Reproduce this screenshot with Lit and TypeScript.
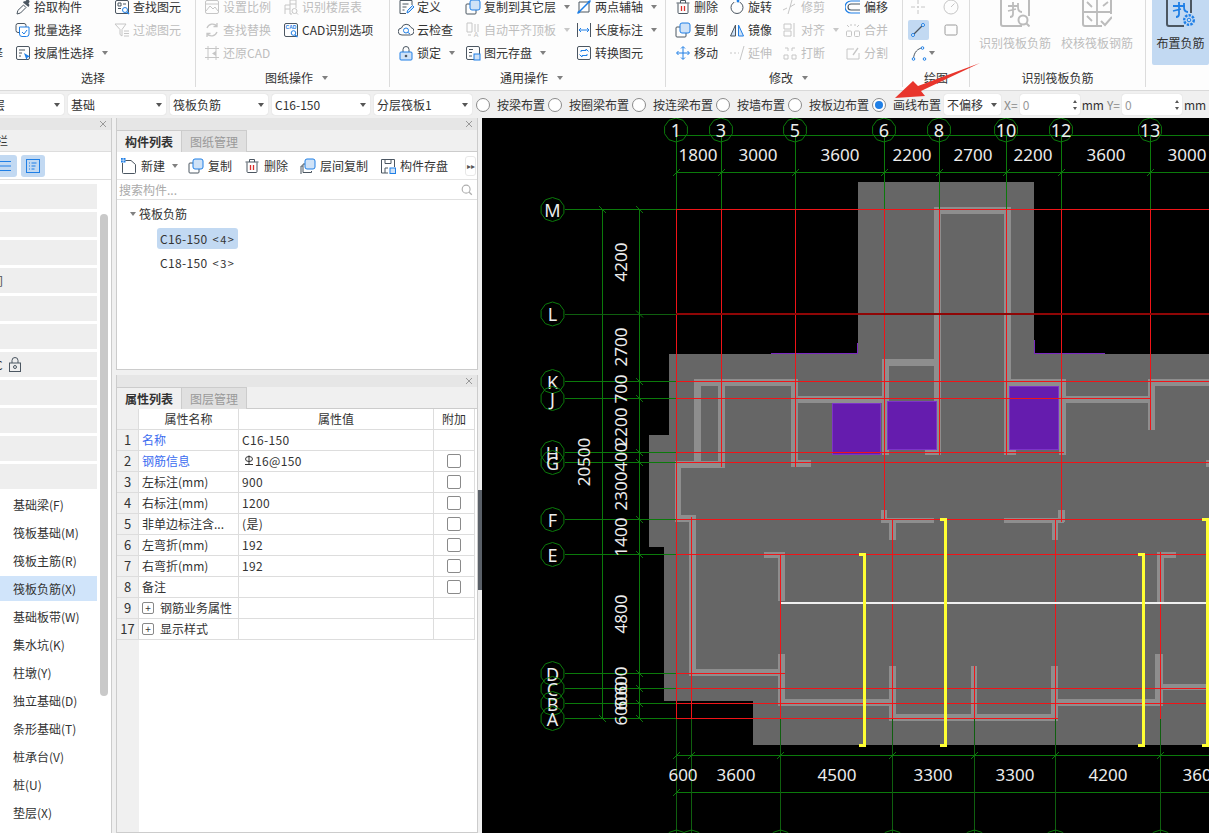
import {LitElement, html, css, svg} from 'lit';
import {customElement} from 'lit/decorators.js';

const D = '#4b5661';
const B = '#1f7fe6';
const L = '#cfe2f7';
const G = '#c6c6c6';

const box = (c: string) => svg`<rect x="1.5" y="1.5" width="13" height="13" rx="1.5" fill="none" stroke=${c}/>`;

const ICONS: Record<string, unknown> = {
  pick: svg`<path d="M2 15l.8-3.5L8.5 6l2.5 2.5L5.5 14z" fill="none" stroke=${D}/><path d="M8 3.5L13.5 8l1-2-1-1.5 1-1.5c.5-1.500-1.500-3-3-2L10 2.500 9 2z" fill=${D}/>`,
  batch: svg`<rect x="1" y="1.500" width="10" height="9" rx="2" fill="none" stroke=${D}/><path d="M4.500 5h9.500v7a2.500 2.500 0 01-2.500 2.500H7A2.500 2.500 0 014.500 12z" fill="#fff" stroke=${B}/><path d="M7 10l2 2 3-4" fill="none" stroke=${B}/>`,
  attr: svg`${box(D)}<path d="M4 5h6M4 8h3M4 11h2" stroke=${D}/><path d="M9 8l6 3.500-2.500 1-1 2.500z" fill=${B}/>`,
  find: svg`${box(D)}<path d="M4 4h3v3H4zM9 5h3M4 9.500h3" fill="none" stroke=${D}/><circle cx="11" cy="11" r="2.500" fill="#fff" stroke=${B}/><path d="M13 13l2 2" stroke=${B} stroke-width="1.500"/>`,
  filter: svg`<path d="M1 2h11L8 7.500V14l-2-1.500v-5z" fill="none" stroke=${G}/><path d="M10 9h5M10 11.500h5M10 14h5" stroke=${G}/>`,
  scale: svg`${box(G)}<path d="M2 12l4-5 3 3 2-2 3 4M2 5h12" fill="none" stroke=${G}/>`,
  replace: svg`<path d="M3 6a6 6 0 0110-2M13 10a6 6 0 01-10 2M13 1v3.500h-3.500M3 15v-3.500h3.500" fill="none" stroke=${G} stroke-width="1.300"/>`,
  restore: svg`<path d="M4 1v14M12 1v14M1 3.500h14M1 12.500h14" stroke=${G}/><path d="M12 6L8 8.500l4 2.500z" fill=${G}/>`,
  floors: svg`<path d="M2 15V6h5V1h6v8M2 10h5M7 5h6M7 6v9h2" fill="none" stroke=${G}/><circle cx="11.500" cy="12" r="2.500" fill="none" stroke=${G}/><path d="M13.500 14l1.500 1.500" stroke=${G}/>`,
  cadopt: svg`${box(D)}<text x="8" y="7" font-size="5" font-weight="700" text-anchor="middle" fill=${B} font-family="Liberation Sans">CAD</text><circle cx="10.500" cy="11" r="2.300" fill="#fff" stroke=${B}/><path d="M12 13l2.500 2" stroke=${B} stroke-width="1.300"/>`,
  define: svg`<path d="M14 6V1.500H2v13h6" fill="none" stroke=${D}/><path d="M4.500 5h6M4.500 8h4M4.500 11h2" stroke=${D}/><path d="M9 14l.5-2.500 5-5 1.500 1.500-5 5z" fill=${L} stroke=${B}/>`,
  cloud: svg`<path d="M4 13a3.500 3.500 0 01-.5-7A5 5 0 0113 5.500a3.800 3.800 0 01-.5 7.500z" fill="none" stroke=${D}/><circle cx="8" cy="8.500" r="2.500" fill="none" stroke=${B}/><path d="M10 10.500l2 1.500" stroke=${B}/>`,
  lock: svg`<path d="M5 7V4.500a3 3 0 016 0V7" fill="none" stroke=${D}/><rect x="2" y="7" width="12" height="8" rx="1" fill=${L} stroke=${B}/><circle cx="8" cy="11" r="1.300" fill=${D}/>`,
  copy: svg`<path d="M5 5H2a1 1 0 00-1 1v8a1 1 0 001 1h8a1 1 0 001-1v-3" fill="none" stroke=${D}/><rect x="5" y="1" width="10" height="10" rx="2" fill=${L} stroke=${B}/>`,
  alignTop: svg`<path d="M2 1h5v9H2zM3 13h3" fill="none" stroke=${G}/><path d="M10 2v8M13 2v8" stroke=${G}/><text x="11" y="15" font-size="7" fill=${G} text-anchor="middle" font-family="Liberation Sans">A</text>`,
  store: svg`${box(D)}<path d="M4 4.500h4M4 7.500h3M4 11h3" stroke=${D}/><rect x="9" y="9" width="6" height="6" fill=${L} stroke=${B}/>`,
  twopt: svg`<path d="M3 3h10v10H3z" fill="none" stroke=${D}/><path d="M1.500 14.500L14.500 1.500" stroke=${B} stroke-width="1.500"/><circle cx="13" cy="3" r="1.300" fill=${B}/><circle cx="3" cy="13" r="1.300" fill=${B}/>`,
  dim: svg`<path d="M1.500 1v14M14.500 1v14" stroke=${D}/><path d="M3 8h10M5 6l-2 2 2 2M11 6l2 2-2 2" fill="none" stroke=${B}/>`,
  convert: svg`${box(D)}<path d="M5 7V5.500h5V4l2.500 2.500M11 9v1.500H6V12L3.500 9.500" fill="none" stroke=${B}/>`,
  del: svg`<path d="M3 4.500v9a1 1 0 001 1h8a1 1 0 001-1v-9M1.500 4h13M5.500 4V1.500h5V4" fill="none" stroke=${D}/><path d="M6.500 7v5M9.500 7v5" stroke="#d9302c" stroke-width="1.300"/>`,
  rotate: svg`<circle cx="8" cy="8.500" r="6" fill="none" stroke=${D}/><path d="M5 1.500h6v2H5z" fill="#fff"/><circle cx="9" cy="2" r="1.400" fill=${B}/>`,
  mirror: svg`<path d="M6.500 3v11H1.500z" fill=${L} stroke=${D}/><path d="M9.500 3v11h5z" fill=${L} stroke=${B}/>`,
  move: svg`<path d="M8 2v12M2 8h12" stroke=${B}/><path d="M6 3.500L8 1.500l2 2M6 12.500l2 2 2-2M3.500 6l-2 2 2 2M12.500 6l2 2-2 2" fill="none" stroke=${B}/>`,
  trim: svg`<path d="M1 11l4-2M8 8l5-3" stroke=${G}/><path d="M10 1l-4 14" stroke=${G}/>`,
  extend: svg`<path d="M1 8h2M5 8h2M9 8h1" stroke=${G}/><path d="M15 1L11 15" stroke=${G}/>`,
  alignR: svg`<path d="M12 1v14" stroke=${G}/><path d="M2 2h7v5H2zM2 9h7v5H2z" fill="none" stroke=${G}/>`,
  breakup: svg`<path d="M3 3h3v3M13 3h-3v3M2 10h4v4H2zM10 10h4v4h-4z" fill="none" stroke=${G}/>`,
  offset: svg`<path d="M15 2H6a5 5 0 000 12h9" fill="none" stroke=${B} stroke-width="1.200"/><path d="M15 5H6a2 2 0 000 6h9" fill="none" stroke=${D} stroke-width="1.200"/>`,
  merge: svg`<path d="M2 3l2 2M14 3l-2 2M6 2v2M10 2v2" stroke=${G}/><rect x="1.500" y="9" width="5" height="5.500" rx="1" fill="none" stroke=${G}/><rect x="9.500" y="9" width="5" height="5.500" rx="1" fill="none" stroke=${G}/>`,
  split: svg`<path d="M9 4H2v10h12V8" fill="none" stroke=${G}/><path d="M8 10l5-7" stroke=${G} stroke-width="1.300"/>`,
  point: svg`<path d="M8 1v4M8 11v4M1 8h4M11 8h4" stroke=${G}/><circle cx="8" cy="8" r="1" fill=${G}/>`,
  circ: svg`<circle cx="8" cy="8" r="7" fill="none" stroke=${G}/><path d="M8 8l3.500-3.500" stroke=${G}/>`,
  line: svg`<path d="M3 13L13 3" stroke=${D} stroke-width="1.200"/><circle cx="3" cy="13" r="1.500" fill="#fff" stroke=${B}/><circle cx="13" cy="3" r="1.500" fill="#fff" stroke=${B}/>`,
  rect: svg`<rect x="2" y="3" width="12" height="10" rx="1.500" fill="none" stroke="#9a9a9a"/>`,
  arc: svg`<path d="M2.500 13.500C3 7 7 3.500 11 3" fill="none" stroke=${D}/><circle cx="2.500" cy="14" r="1.300" fill="#fff" stroke=${B}/><circle cx="11.500" cy="3" r="1.300" fill="#fff" stroke=${B}/><circle cx="13.500" cy="14" r="1.300" fill="#fff" stroke=${B}/>`,
  fresh: svg`<path d="M4 2.500h6l4.500 4v8a1 1 0 01-1 1H2.500a1 1 0 01-1-1V5" fill="none" stroke=${D}/><rect x="0" y="0" width="4.500" height="4.500" fill=${B}/><path d="M0 2.200h4.500M2.200 0v4.500" stroke="#fff" stroke-width=".6"/>`,
  layerCopy: svg`<path d="M5 6H3v8.500h8.500V13M3 8H1v8" fill="none" stroke=${D}/><rect x="5" y="1" width="10" height="10" rx="2" fill=${L} stroke=${B}/>`,
  save: svg`<path d="M8 15H1.500V1.500h13V9" fill="none" stroke=${D}/><path d="M5 1.500v4h6v-4M5 15v-5h3" fill="none" stroke=${D}/><rect x="10" y="10" width="5.500" height="5.500" fill=${L} stroke=${B}/>`,
  mag: svg`<circle cx="7" cy="7" r="4.500" fill="none" stroke="#aeaeae" stroke-width="1.300"/><path d="M10.500 10.500l3 3" stroke="#aeaeae" stroke-width="1.500"/>`,
  rows: svg`<path d="M2 3.500h12M2 8h12M2 12.500h12" stroke=${B} stroke-width="1.200"/>`,
  list: svg`<rect x="1.500" y="1.500" width="13" height="13" fill="none" stroke=${B}/><path d="M4 5h1M6.500 5h5M4 8h1M6.500 8h4M4 11h1M6.500 11h3" stroke=${B}/>`,
  padlock: svg`<rect x="2.500" y="6" width="11" height="8.500" fill="none" stroke=${D}/><path d="M5 6V3.500a3 3 0 016 0V6" fill="none" stroke=${D}/><circle cx="8" cy="10" r="1.500" fill="none" stroke=${D}/>`,
};

const bigRecog = svg`<path d="M22 29H3a2 2 0 01-2-2V3a2 2 0 012-2h24a2 2 0 012 2v16" fill="none" stroke="#bcbcbc" stroke-width="2"/><path d="M8 9h10M13 5v12c0 2-1 3-3 3M18 6v4c0 3 1 5 4 5M8 14l8-2" fill="none" stroke="#bcbcbc" stroke-width="1.800"/><circle cx="23" cy="23" r="4.500" fill="#fff" stroke="#bcbcbc" stroke-width="2"/><path d="M26 26l3.500 3.500" stroke="#bcbcbc" stroke-width="2"/>`;
const bigCheck = svg`<path d="M20 29H3a2 2 0 01-2-2V3a2 2 0 012-2h24a2 2 0 012 2v14" fill="none" stroke="#bcbcbc" stroke-width="2"/><path d="M15 1v28M1 15h28M5 5l5 5M21 9l5-4M5 19l5 5" fill="none" stroke="#bcbcbc" stroke-width="1.800"/><path d="M19 24l4 4 7-8" fill="none" stroke="#bcbcbc" stroke-width="2"/>`;
const bigPlace = svg`<path d="M18 29H3a2 2 0 01-2-2V3a2 2 0 012-2h20a2 2 0 012 2v13" fill="none" stroke="#4b5661" stroke-width="2"/><path d="M7 9h12M13 5v12c0 2-1 3-3 3M18 6v4c0 3 1 5 4 5M7 14l8-2" fill="none" stroke=${B} stroke-width="1.800"/><circle cx="23" cy="23" r="4.800" fill="none" stroke=${B} stroke-width="2.400" stroke-dasharray="2.400 1.200"/><circle cx="23" cy="23" r="1.800" fill="none" stroke=${B}/>`;

const icon = (name: string) => html`<svg class="ic" viewBox="0 0 16 16">${ICONS[name]}</svg>`;

interface Tool {
  i?: string;
  t?: string;
  caret?: boolean;
  off?: boolean;
}

const it = (i: string, t: string, caret = false, off = false): Tool => ({i, t, caret, off});

const GROUPS: {cls: string; label: string; caret: boolean; cells: (Tool | null)[]}[] = [
  {
    cls: 'g-select',
    label: '选择',
    caret: false,
    cells: [
      null, it('pick', '拾取构件'), it('find', '查找图元'),
      null, it('batch', '批量选择'), it('filter', '过滤图元', false, true),
      {t: '择'}, it('attr', '按属性选择', true), null,
    ],
  },
  {
    cls: 'g-drawing',
    label: '图纸操作',
    caret: true,
    cells: [
      it('scale', '设置比例', false, true), it('floors', '识别楼层表', false, true),
      it('replace', '查找替换', false, true), it('cadopt', 'CAD识别选项'),
      it('restore', '还原CAD', false, true), null,
    ],
  },
  {
    cls: 'g-common',
    label: '通用操作',
    caret: true,
    cells: [
      it('define', '定义'), it('copy', '复制到其它层', true), it('twopt', '两点辅轴', true),
      it('cloud', '云检查'), it('alignTop', '自动平齐顶板', true, true), it('dim', '长度标注', true),
      it('lock', '锁定', true), it('store', '图元存盘', true), it('convert', '转换图元'),
    ],
  },
  {
    cls: 'g-modify',
    label: '修改',
    caret: true,
    cells: [
      it('del', '删除'), it('rotate', '旋转'), it('trim', '修剪', false, true), it('offset', '偏移'),
      it('copy', '复制'), it('mirror', '镜像'), it('alignR', '对齐', true, true), it('merge', '合并', false, true),
      it('move', '移动'), it('extend', '延伸', false, true), it('breakup', '打断', false, true), it('split', '分割', false, true),
    ],
  },
];

const COMBOS = ['基础层', '基础', '筏板负筋', 'C16-150', '分层筏板1'];
const RADIOS = ['按梁布置', '按圈梁布置', '按连梁布置', '按墙布置', '按板边布置', '画线布置'];
const NAV = ['基础梁(F)', '筏板基础(M)', '筏板主筋(R)', '筏板负筋(X)', '基础板带(W)', '集水坑(K)', '柱墩(Y)', '独立基础(D)', '条形基础(T)', '桩承台(V)', '桩(U)', '垫层(X)'];
const PROPS: {n: string; name: string; value?: string; blue?: boolean; check?: boolean; plus?: boolean; bar?: boolean}[] = [
  {n: '1', name: '名称', value: 'C16-150', blue: true},
  {n: '2', name: '钢筋信息', value: '16@150', blue: true, check: true, bar: true},
  {n: '3', name: '左标注(mm)', value: '900', check: true},
  {n: '4', name: '右标注(mm)', value: '1200', check: true},
  {n: '5', name: '非单边标注含...', value: '(是)', check: true},
  {n: '6', name: '左弯折(mm)', value: '192', check: true},
  {n: '7', name: '右弯折(mm)', value: '192', check: true},
  {n: '8', name: '备注', check: true},
  {n: '9', name: '钢筋业务属性', plus: true},
  {n: '17', name: '显示样式', plus: true},
];

// canvas data, in page coordinates
const TOP = [['1', 676.5], ['3', 721.5], ['5', 795.5], ['6', 884.5], ['8', 939.5], ['10', 1006.5], ['12', 1061.5], ['13', 1150.5]] as [string, number][];
const SIDE = [['M', 209.5], ['L', 314], ['K', 381.5], ['J', 398.5], ['H', 452.5], ['G', 462.5], ['F', 519.5], ['E', 554.5], ['D', 673.5], ['C', 688.5], ['B', 703.5], ['A', 718.5]] as [string, number][];
const BOTTOM = [676.5, 691.5, 780.5, 892.5, 974.5, 1055.5, 1160.5];
const DIM_TOP = [['1800', 698], ['3000', 758], ['3600', 840], ['2200', 912], ['2700', 973], ['2200', 1033], ['3600', 1106], ['3000', 1187]] as [string, number][];
const DIM_BOTTOM = [['600', 683], ['3600', 736], ['4500', 837], ['3300', 933], ['3300', 1015], ['4200', 1108], ['3600', 1202]] as [string, number][];
const DIM_SIDE = [['4200', 262], ['2700', 347], ['700', 389], ['2200', 427], ['400', 457], ['2300', 491], ['1400', 537], ['4800', 614], ['600', 681], ['600', 696], ['600', 711]] as [string, number][];

// wall strips: x, y, w, h
const WALLS = [
  [694, 379, 104, 7], [694, 379, 7, 83], [718, 379, 7, 49], [791, 379, 7, 88], [798, 396, 85, 7],
  [882, 359, 7, 96], [882, 359, 54, 7], [934, 207, 7, 248], [934, 207, 77, 7], [1004, 207, 7, 248],
  [1004, 379, 62, 7], [1059, 379, 7, 76], [1066, 396, 84, 7], [1148, 379, 7, 51], [1155, 379, 54, 7],
  [675, 461, 50, 7], [718, 428, 7, 39], [791, 460, 20, 7], [925, 450, 16, 5], [1004, 450, 12, 5],
  [1206, 460, 3, 7], [675, 461, 6, 60], [675, 515, 21, 7], [689, 515, 7, 160], [689, 669, 96, 7],
  [778, 552, 7, 49], [764, 552, 21, 6], [778, 654, 7, 52], [785, 699, 104, 7], [889, 666, 7, 54],
  [889, 714, 169, 7], [971, 666, 6, 54], [1051, 666, 7, 54], [1058, 699, 102, 7], [1155, 654, 8, 52],
  [1163, 684, 46, 6], [1157, 552, 7, 50], [1164, 552, 12, 6], [881, 510, 6, 12], [881, 518, 53, 5],
  [889, 518, 7, 22], [1004, 518, 60, 5], [1052, 518, 6, 22], [1058, 510, 7, 12],
];
// red strips, one pixel wide: x, y, w, h
const RED = [
  [676, 209, 1, 510], [721, 209, 1, 258], [795, 209, 1, 258], [884, 209, 1, 310],
  [939, 209, 1, 246], [1006, 209, 1, 246], [1061, 209, 1, 313], [1150, 209, 1, 221],
  [691, 517, 1, 202], [780, 554, 1, 165], [892, 519, 1, 200], [974, 666, 1, 53],
  [1055, 519, 1, 200], [1160, 552, 1, 167],
  [676, 209, 533, 1], [676, 381, 533, 1], [676, 398, 474, 1], [676, 452, 388, 1],
  [676, 462, 533, 1], [676, 519, 533, 1], [676, 554, 533, 1], [676, 673, 109, 1],
  [676, 688, 533, 1], [676, 703, 533, 1], [676, 718, 382, 1],
];
const YELLOW = [[945, 519], [864, 554], [1143, 554], [1207, 519]];

const decagon = (cx: number, cy: number) =>
  Array.from({length: 10}, (_, i) => {
    const a = (i * Math.PI) / 5 - Math.PI / 2;
    return `${(cx + 12 * Math.cos(a)).toFixed(1)},${(cy + 12 * Math.sin(a)).toFixed(1)}`;
  }).join(' ');

const tick = (x: number, y: number, slash: boolean) =>
  svg`<line class="gr" x1=${x - 3.5} y1=${slash ? y + 3.5 : y - 3.5} x2=${x + 3.5} y2=${slash ? y - 3.5 : y + 3.5}/>`;

@customElement('app-root')
class AppRoot extends LitElement {
  static override styles = css`
    :host {
      display: block;
      position: relative;
      width: 1209px;
      height: 833px;
      overflow: hidden;
      background: #f0f0f0;
      color: #333;
      font: 12px/16px 'Noto Sans CJK SC', 'Noto Sans', sans-serif;
    }

    .ic {
      width: 16px;
      height: 16px;
      flex: none;
      display: block;
    }

    /* ribbon */
    .ribbon {
      display: flex;
      height: 91px;
      background: #fdfdfd;
      border-bottom: 1px solid #d9d9d9;
      box-sizing: border-box;
      overflow: hidden;
    }
    .group {
      flex: none;
      box-sizing: border-box;
      height: 87px;
      border-right: 1px solid #dcdcdc;
      display: flex;
      flex-direction: column;
      justify-content: space-between;
    }
    .cells {
      display: grid;
      grid-auto-rows: 23px;
      margin-top: -4.5px;
    }
    .g-select { width: 228px; margin-left: -32px; padding-left: 23px; }
    .g-select .cells { grid-template-columns: 24px 99px 80px; }
    .g-drawing { width: 194px; padding-left: 8px; }
    .g-drawing .cells { grid-template-columns: 79px 100px; }
    .g-common { width: 276px; padding-left: 8px; }
    .g-common .cells { grid-template-columns: 67px 111px 90px; }
    .g-modify { width: 237px; padding-left: 9px; }
    .g-modify .cells { grid-template-columns: 54px 53px 63px 50px; }
    .g-draw { width: 67px; }
    .g-draw .cells { grid-template-columns: 30px 36px; justify-items: center; align-items: center; }
    .g-draw .tool { justify-self: start; margin-left: 8px; }
    .g-recog { width: 176px; }
    .g-place { width: 70px; border-right: 0; height: 91px; }

    .tool {
      display: flex;
      align-items: center;
      gap: 3px;
      white-space: nowrap;
      min-width: 0;
    }
    .tool.off { color: #bdbdbd; }
    .caret {
      width: 0;
      height: 0;
      flex: none;
      margin-left: 5px;
      border: 3px solid transparent;
      border-top: 4px solid #808080;
      border-bottom: 0;
    }
    .tool.off .caret { border-top-color: #c8c8c8; }
    .label {
      display: flex;
      justify-content: center;
      align-items: center;
      height: 16px;
      margin-bottom: 1px;
    }
    .label .caret { margin-left: 9px; }
    .g-draw .active {
      width: 21px;
      height: 20px;
      display: flex;
      align-items: center;
      justify-content: center;
      background: #c2d9f2;
      border-radius: 2px;
    }
    .big-row { display: flex; margin-top: -3px; }
    .big {
      width: 82px;
      display: flex;
      flex-direction: column;
      align-items: center;
      gap: 8px;
      color: #bdbdbd;
    }
    .big svg { width: 30px; height: 30px; display: block; }
    .big-row .big:first-child { margin-left: 4px; }
    .place {
      width: 57px;
      height: 68px;
      margin-left: 6px;
      background: #c2d9f2;
      border-radius: 2px;
      color: #333;
      display: flex;
      flex-direction: column;
      align-items: center;
      gap: 8px;
      box-sizing: border-box;
      margin-top: -3px;
    }
    .place svg { width: 30px; height: 30px; display: block; }

    /* options bar */
    .options {
      display: flex;
      align-items: center;
      height: 27px;
      background: #f0f0f0;
      white-space: nowrap;
    }
    .combo {
      flex: none;
      box-sizing: border-box;
      width: 98px;
      height: 21px;
      margin-right: 4px;
      padding: 0 4px 0 3px;
      background: #fff;
      border-radius: 3px;
      box-shadow: 0 0 1px #c0c0c0;
      display: flex;
      align-items: center;
      justify-content: space-between;
    }
    .combo:first-child { margin-left: -34px; }
    .combo .caret { margin: 0; border-top-color: #555; }
    .offset { width: 57px; margin: 0 3px 0 3px; }
    .radio {
      flex: none;
      display: flex;
      align-items: center;
      gap: 7px;
      padding-right: 3px;
    }
    .dot {
      box-sizing: border-box;
      width: 14px;
      height: 14px;
      border: 1px solid #8a8a8a;
      border-radius: 50%;
      background: #fff;
      display: flex;
      align-items: center;
      justify-content: center;
    }
    .dot i {
      width: 8px;
      height: 8px;
      border-radius: 50%;
      background: #1f7fe6;
    }
    .radio.wide { padding-right: 0; }
    .muted { color: #8a8a8a; }
    .num {
      flex: none;
      box-sizing: border-box;
      width: 60px;
      height: 21px;
      margin: 0 2px;
      padding: 0 3px;
      background: #fff;
      border-radius: 3px;
      box-shadow: 0 0 1px #c0c0c0;
      color: #999;
      display: flex;
      align-items: center;
      justify-content: space-between;
    }
    .spin {
      display: flex;
      flex-direction: column;
      gap: 4px;
    }
    .spin i {
      width: 0;
      height: 0;
      border: 2.5px solid transparent;
      border-bottom: 3px solid #555;
      border-top: 0;
    }
    .spin i + i {
      border-top: 3px solid #555;
      border-bottom: 0;
    }

    /* work area */
    .work {
      display: flex;
      height: 715px;
    }
    .nav {
      flex: none;
      position: relative;
      width: 112px;
      box-sizing: border-box;
      background: #fff;
      border-right: 1px solid #ccc;
      overflow: hidden;
    }
    .bar {
      height: 12px;
      background: #e6e6e6;
      display: flex;
      justify-content: flex-end;
      align-items: center;
      padding-right: 4px;
    }
    .bar svg { width: 8px; height: 8px; display: block; }
    .nav-head {
      height: 22px;
      line-height: 22px;
      background: #f0f0f0;
      border-bottom: 1px solid #ddd;
      box-sizing: border-box;
      overflow: hidden;
    }
    .nav-head span { display: block; margin-left: -4px; }
    .nav-icons {
      display: flex;
      height: 28px;
      align-items: center;
      gap: 4px;
      margin-left: -7px;
      border-bottom: 1px solid #ddd;
      box-sizing: border-box;
    }
    .nav-btn {
      width: 24px;
      height: 22px;
      display: flex;
      align-items: center;
      justify-content: center;
      background: #c2d9f2;
      border-radius: 3px;
    }
    .nav-list {
      display: flex;
      flex-direction: column;
      gap: 3px;
      width: 97px;
      padding-top: 4px;
    }
    .nav-row {
      flex: none;
      height: 25px;
      line-height: 25px;
      padding-left: 13px;
      white-space: nowrap;
      overflow: hidden;
    }
    .nav-row.on { background: #d0e4fa; }
    .nav-row.blank {
      background: #eeeeee;
      padding: 0;
      display: flex;
      align-items: center;
      gap: 4px;
    }
    .thumb {
      position: absolute;
      left: 100px;
      top: 96px;
      width: 8px;
      height: 482px;
      background: #c9c9c9;
      border-radius: 4px;
    }
    .mid {
      flex: none;
      width: 362px;
      margin-left: 4px;
      display: flex;
      flex-direction: column;
      gap: 5px;
    }
    .panel {
      box-sizing: border-box;
      border: 1px solid #ccc;
      border-top: 0;
      background: #fff;
      display: flex;
      flex-direction: column;
    }
    .panel.top { height: 252px; flex: none; }
    .panel.low { flex: 1; min-height: 0; }
    .tabs {
      display: flex;
      background: #f0f0f0;
      flex: none;
      border-bottom: 1px solid #ccc;
      height: 21px;
    }
    .tab {
      box-sizing: border-box;
      width: 65px;
      height: 22px;
      line-height: 21px;
      text-align: center;
      font-weight: 700;
      border-right: 1px solid #ccc;
      border-top: 1px solid #ccc;
      background: #f0f0f0;
    }
    .tab + .tab {
      font-weight: 400;
      background: #e0e0e0;
      color: #999;
    }
    .tools {
      flex: none;
      display: flex;
      align-items: center;
      height: 28px;
      padding: 0 1px 0 4px;
      border-bottom: 1px solid #e4e4e4;
      box-sizing: border-box;
      white-space: nowrap;
    }
    .tools .tool { gap: 4px; margin-right: 12px; }
    .tools .tool.new { margin-right: 10px; }
    .more {
      margin-left: auto;
      width: 11px;
      height: 20px;
      border: 1px solid #e8e8e8;
      border-radius: 3px;
      font-size: 8px;
      line-height: 18px;
      text-align: center;
      color: #555;
      box-sizing: border-box;
    }
    .search {
      flex: none;
      display: flex;
      align-items: center;
      justify-content: space-between;
      height: 19px;
      padding: 0 3px 0 2px;
      color: #aaa;
      border-bottom: 1px solid #e0e0e0;
    }
    .search .ic { width: 14px; height: 14px; }
    .tree { padding-top: 2px; }
    .node {
      height: 24px;
      display: flex;
      align-items: center;
      white-space: nowrap;
    }
    .node.root { padding-left: 13px; gap: 3px; }
    .node.root .caret { margin: 0; border-width: 3.5px; border-top-width: 4px; border-bottom-width: 0; }
    .leaf {
      margin-left: 40px;
      height: 21px;
      line-height: 21px;
      padding: 0 3px;
      border-radius: 3px;
      letter-spacing: 0.35px;
    }
    .leaf.on { background: #c2d9f2; }
    .leaf small { font-size: 11px; margin-left: 5px; letter-spacing: 1.5px; }
    .grid {
      flex: 1;
      min-height: 0;
      display: flex;
      flex-direction: column;
      margin-right: 1px;
    }
    .row {
      flex: none;
      display: grid;
      grid-template-columns: 22px 100px 195px 41px;
      height: 21px;
    }
    .cell {
      box-sizing: border-box;
      border-right: 1px solid #ddd;
      border-bottom: 1px solid #ddd;
      padding: 0 3px;
      line-height: 20px;
      display: flex;
      align-items: center;
      white-space: nowrap;
      overflow: hidden;
    }
    .cell.no {
      background: #f0f0f0;
      justify-content: center;
      padding: 0;
      font-size: 13px;
    }
    .cell.head { justify-content: center; }
    .cell.chk { justify-content: center; }
    .cell.blue { color: #3c6df0; }
    .cell.val { letter-spacing: 0.35px; }
    .box {
      box-sizing: border-box;
      width: 14px;
      height: 14px;
      border: 1px solid #8a8a8a;
      border-radius: 2px;
    }
    .plus {
      box-sizing: border-box;
      flex: none;
      width: 12px;
      height: 12px;
      margin-right: 6px;
      border: 1px solid #888;
      border-radius: 2px;
      display: flex;
      align-items: center;
      justify-content: center;
      font-size: 10px;
      line-height: 10px;
    }
    .rebar { width: 10px; height: 10px; margin: -3px 1px 0 2px; flex: none; }
    .rest { flex: 1; }
    .rest div { width: 22px; height: 100%; background: #f0f0f0; }
    .canvas {
      flex: none;
      width: 727px;
      height: 715px;
      margin-left: 4px;
      background: #000;
    }
    .canvas svg { display: block; }
    .gr { stroke: #0b7a0b; stroke-width: 1; fill: none; }
    .dark { stroke: #0f5f0f; }
    .cad {
      fill: #ececec;
      font: 17px 'Noto Sans', sans-serif;
      text-anchor: middle;
      dominant-baseline: central;
    }
    .cad.axis { font-size: 18px; }

    /* things lying over the rest */
    .splitter {
      position: absolute;
      left: 478px;
      top: 490px;
      width: 4px;
      height: 100px;
      background: #5a6068;
    }
    .arrow {
      position: absolute;
      left: 880px;
      top: 55px;
      width: 110px;
      height: 50px;
    }
  `;

  private renderTool(c: Tool | null) {
    if (!c) return html`<div></div>`;
    return html`<div class="tool ${c.off ? 'off' : ''}">
      ${c.i ? icon(c.i) : ''}<span>${c.t}</span>${c.caret ? html`<i class="caret"></i>` : ''}
    </div>`;
  }

  private renderRibbon() {
    return html`<div class="ribbon">
      ${GROUPS.map(
        (g) => html`<div class="group ${g.cls}">
          <div class="cells">${g.cells.map((c) => this.renderTool(c))}</div>
          <div class="label"><span>${g.label}</span>${g.caret ? html`<i class="caret"></i>` : ''}</div>
        </div>`
      )}
      <div class="group g-draw">
        <div class="cells">
          ${icon('point')}${icon('circ')}
          <div class="active">${icon('line')}</div>${icon('rect')}
          <div class="tool">${icon('arc')}<i class="caret" style="margin-left:-1px"></i></div>
        </div>
        <div class="label">绘图</div>
      </div>
      <div class="group g-recog">
        <div class="big-row">
          <div class="big"><svg viewBox="0 0 30 30">${bigRecog}</svg>识别筏板负筋</div>
          <div class="big"><svg viewBox="0 0 30 30">${bigCheck}</svg>校核筏板钢筋</div>
        </div>
        <div class="label">识别筏板负筋</div>
      </div>
      <div class="group g-place">
        <div class="place"><svg viewBox="0 0 30 30">${bigPlace}</svg>布置负筋</div>
      </div>
    </div>`;
  }

  private renderOptionBar() {
    return html`<div class="options">
      ${COMBOS.map((c) => html`<div class="combo"><span>${c}</span><i class="caret"></i></div>`)}
      ${RADIOS.map(
        (r, i) => html`<div class="radio ${i === 5 ? 'wide' : ''}">
          <span class="dot">${i === 5 ? html`<i></i>` : ''}</span><span>${r}</span>
        </div>`
      )}
      <div class="combo offset"><span>不偏移</span><i class="caret"></i></div>
      <span class="muted">X=</span>
      <div class="num"><span>0</span><span class="spin"><i></i><i></i></span></div>
      <span>mm</span><span class="muted" style="margin-left:3px">Y=</span>
      <div class="num"><span>0</span><span class="spin"><i></i><i></i></span></div>
      <span>mm</span>
    </div>`;
  }

  private closeBar() {
    return html`<div class="bar"><svg viewBox="0 0 8 8"><path d="M1 1l6 6M7 1L1 7" stroke="#999"/></svg></div>`;
  }

  private renderNav() {
    const blanks = Array.from({length: 11}, (_, i) => i);
    return html`<div class="nav">
      ${this.closeBar()}
      <div class="nav-head"><span>栏</span></div>
      <div class="nav-icons">
        <div class="nav-btn">${icon('rows')}</div>
        <div class="nav-btn">${icon('list')}</div>
      </div>
      <div class="nav-list">
        ${blanks.map(
          (i) => html`<div class="nav-row blank">
            ${i === 3 ? html`<span style="margin-left:-9px;color:#555">间</span>` : ''}
            ${i === 6 ? html`<span style="margin-left:-5px">C</span>${icon('padlock')}` : ''}
          </div>`
        )}
        ${NAV.map((n, i) => html`<div class="nav-row ${i === 3 ? 'on' : ''}">${n}</div>`)}
      </div>
      <div class="thumb"></div>
    </div>`;
  }

  private renderList() {
    return html`<div class="panel top">
      ${this.closeBar()}
      <div class="tabs"><div class="tab">构件列表</div><div class="tab">图纸管理</div></div>
      <div class="tools">
        <div class="tool new">${icon('fresh')}<span>新建</span><i class="caret" style="margin-left:3px"></i></div>
        <div class="tool">${icon('copy')}<span>复制</span></div>
        <div class="tool">${icon('del')}<span>删除</span></div>
        <div class="tool">${icon('layerCopy')}<span>层间复制</span></div>
        <div class="tool">${icon('save')}<span>构件存盘</span></div>
        <div class="more">▸▸</div>
      </div>
      <div class="search"><span>搜索构件...</span>${icon('mag')}</div>
      <div class="tree">
        <div class="node root"><i class="caret"></i><span>筏板负筋</span></div>
        <div class="node"><div class="leaf on">C16-150<small>&lt;4&gt;</small></div></div>
        <div class="node"><div class="leaf">C18-150<small>&lt;3&gt;</small></div></div>
      </div>
    </div>`;
  }

  private renderProps() {
    return html`<div class="panel low">
      ${this.closeBar()}
      <div class="tabs"><div class="tab">属性列表</div><div class="tab">图层管理</div></div>
      <div class="grid">
        <div class="row">
          <div class="cell no"></div>
          <div class="cell head">属性名称</div>
          <div class="cell head">属性值</div>
          <div class="cell head">附加</div>
        </div>
        ${PROPS.map(
          (p) => html`<div class="row">
            <div class="cell no">${p.n}</div>
            <div class="cell ${p.blue ? 'blue' : ''}">
              ${p.plus ? html`<span class="plus">+</span>` : ''}${p.name}
            </div>
            <div class="cell val">
              ${p.bar
                ? html`<svg class="rebar" viewBox="0 0 10 10"><path d="M1 9.500h8M5 .5v9" stroke="#333" fill="none"/><ellipse cx="5" cy="4" rx="3.500" ry="2.500" fill="none" stroke="#333"/></svg>`
                : ''}${p.value ?? ''}
            </div>
            <div class="cell chk">${p.check ? html`<span class="box"></span>` : ''}</div>
          </div>`
        )}
        <div class="rest"><div></div></div>
      </div>
    </div>`;
  }

  private renderCanvas() {
    return html`<div class="canvas">
      <svg width="727" height="715" viewBox="482 118 727 715" shape-rendering="crispEdges">
        <path fill="#666" d="M857.500 182H1034V354H1209V745H753V701H664V547H649V435H669V354H857.500z"/>
        ${WALLS.map(([x, y, w, h]) => svg`<rect x=${x} y=${y} width=${w} height=${h} fill="#8e8e8e"/>`)}
        <g fill="#651cae" stroke="#7d34c8">
          <rect x="832.500" y="403.500" width="48" height="51"/>
          <rect x="887.500" y="401.500" width="49" height="48"/>
          <rect x="1009.500" y="386.500" width="49" height="63"/>
        </g>
        <path d="M771 353.500H857V343M1034 340V353.500H1105" fill="none" stroke="#7a28c0"/>

        <path class="gr" d="M676 135.500H1209M676 172.500H1209M602.500 209.500V718.500M639.500 209.500V718.500M676 755.500H1209M676 792.500H1209"/>
        ${TOP.map(([, x]) => svg`<path class="gr" d="M${x} 135V209"/>`)}
        ${SIDE.map(([, y]) => svg`<path class="gr ${y === 314 ? 'dark' : ''}" stroke-width=${y === 314 ? 2 : 1} d="M565 ${y}H676"/>`)}
        ${BOTTOM.map((x) => svg`<path class="gr dark" d="M${x} 719V833"/>`)}
        ${RED.map(([x, y, w, h]) => svg`<rect x=${x} y=${y} width=${w} height=${h} fill="#f01418"/>`)}
        <path d="M676 314H1209" stroke="#8f0606" stroke-width="2"/>
        <path d="M781 603H1209" stroke="#f0f0f0" stroke-width="2"/>
        ${YELLOW.map(
          ([x, y]) => svg`<path d="M${x - 5} ${y}H${x}V745H${x - 5}" fill="none" stroke="#ffff33" stroke-width="3"/>`
        )}
        <g shape-rendering="auto">
          ${TOP.map(([, x]) => tick(x, 172.5, true))}
          ${BOTTOM.map((x) => tick(x, 755.5, true))}
          ${tick(676.5, 792.5, true)}
          ${SIDE.map(([, y]) => tick(639.5, y, false))}
          ${tick(602.5, 209.5, false)}${tick(602.5, 718.5, false)}
          ${TOP.map(
            ([t, x]) => svg`<polygon class="gr" points=${decagon(x - 0.5, 130)}/><text class="cad axis" x=${x - 0.5} y="130">${t}</text>`
          )}
          ${SIDE.map(
            ([t, y]) => svg`<polygon class="gr" points=${decagon(552.5, y)}/><text class="cad axis" x="552.5" y=${y}>${t}</text>`
          )}
          ${BOTTOM.map((x) => svg`<polygon class="gr" points=${decagon(x, 842)}/>`)}
          ${DIM_TOP.map(([t, x]) => svg`<text class="cad" x=${x} y="154">${t}</text>`)}
          ${DIM_BOTTOM.map(([t, x]) => svg`<text class="cad" x=${x} y="774">${t}</text>`)}
          ${DIM_SIDE.map(
            ([t, y]) => svg`<text class="cad" x="620.500" y=${y} transform="rotate(-90 620.500 ${y})">${t}</text>`
          )}
          <text class="cad" x="583.500" y="462" transform="rotate(-90 583.500 462)">20500</text>
        </g>
      </svg>
    </div>`;
  }

  override render() {
    return html`
      ${this.renderRibbon()} ${this.renderOptionBar()}
      <div class="work">
        ${this.renderNav()}
        <div class="mid">${this.renderList()} ${this.renderProps()}</div>
        ${this.renderCanvas()}
      </div>
      <div class="splitter"></div>
      <svg class="arrow" viewBox="880 55 110 50">
        <path fill="#e8352c" d="M980 63L918 86 913 81 895 98 925 96 921 91z"/>
      </svg>
    `;
  }
}

declare global {
  interface HTMLElementTagNameMap {
    'app-root': AppRoot;
  }
}
